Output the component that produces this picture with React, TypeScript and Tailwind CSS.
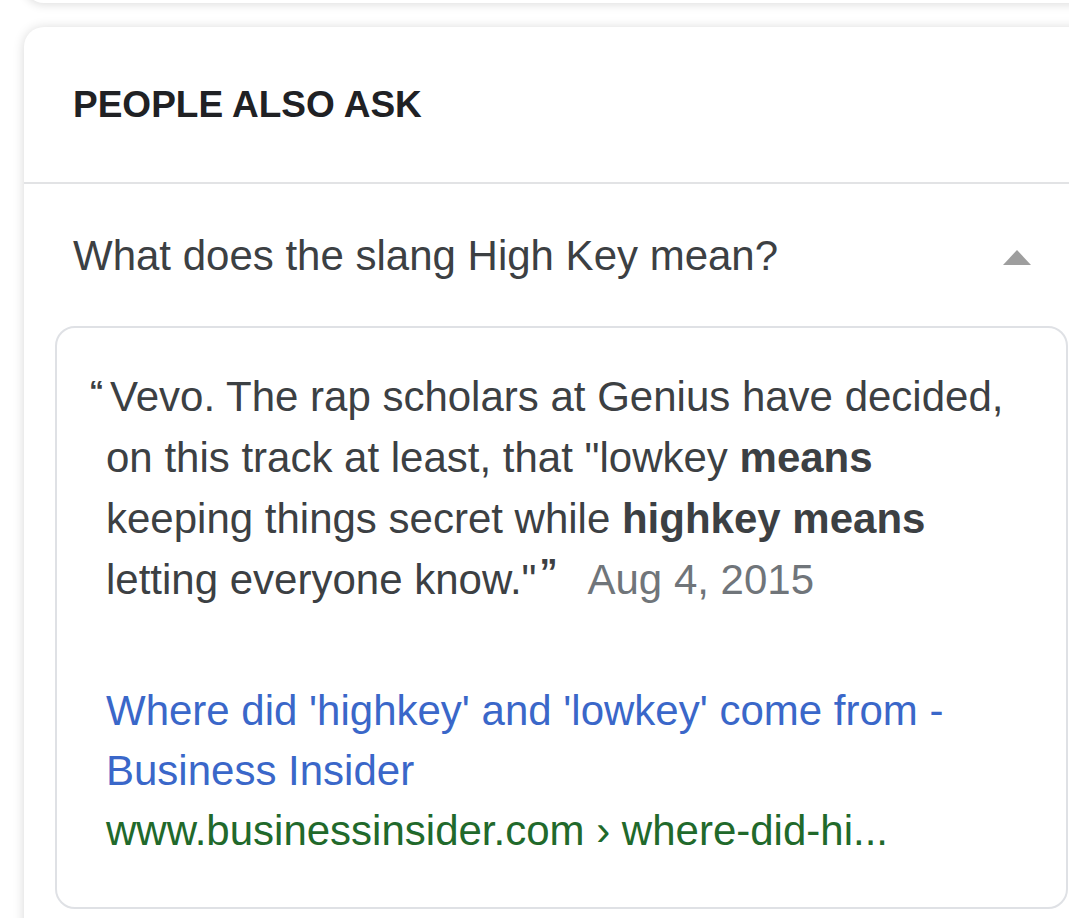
const FONT = "font-['Liberation_Sans',Arial,Helvetica,sans-serif]";

const App = () => {
    return (
        <div className={`w-[1069px] h-[918px] overflow-hidden bg-white ${FONT}`}>
            {/* bottom of the card above */}
            <div className="-mt-[40px] ml-[24px] h-[43px] w-[1075px] rounded-b-[20px] bg-white shadow-[0_2px_10px_rgba(0,0,0,0.13)]" />

            <div className="mt-[24px] ml-[24px] w-[1075px] rounded-[20px] bg-white shadow-[0_1px_12px_rgba(0,0,0,0.16)] pb-[40px]">
                <div className="h-[157px] flex items-center pl-[49px] border-b-[2px] border-[#e2e3e5]">
                    <h2 className="text-[37px] leading-none font-bold text-[#202124]">PEOPLE ALSO ASK</h2>
                </div>

                <div className="flex items-center justify-between pl-[49px] pr-[68px] pt-[42px] pb-[40px]">
                    <span className="text-[42px] leading-[60px] text-[#3c4043]">What does the slang High Key mean?</span>
                    <svg width="28" height="15" viewBox="0 0 28 15" className="mt-[2px]">
                        <path d="M14 0 L28 15 L0 15 Z" fill="#9e9e9e" />
                    </svg>
                </div>

                <div className="mx-[31px] rounded-[20px] border-[2px] border-[#dfe1e5] pl-[49px] pr-[52px] pt-[38px] pb-[46px]">
                    <p className="text-[42px] leading-[61px] text-[#3c4043] -indent-[17px]">
                        <span className="inline-block indent-0 w-[21px] text-[30px] leading-none align-[10px] font-bold">“</span>Vevo. The rap scholars at Genius have decided, on this track at least, that "lowkey{" "}
                        <b>means</b> keeping things secret while <b>highkey means</b> letting everyone know."
                        <span className="text-[36px] leading-none align-[9px] font-bold ml-[3px]">”</span>
                        <span className="text-[#70757a] ml-[30px]">Aug 4, 2015</span>
                    </p>

                    <div className="mt-[71px]">
                        <a className="block text-[42px] leading-[60px] text-[#3a67c9]">
                            Where did 'highkey' and 'lowkey' come from - Business Insider
                        </a>
                        <div className="text-[42px] leading-[60px] text-[#21692b] whitespace-nowrap">
                            www.businessinsider.com › where-did-hi...
                        </div>
                    </div>
                </div>
            </div>
        </div>
    );
};

export default App;
